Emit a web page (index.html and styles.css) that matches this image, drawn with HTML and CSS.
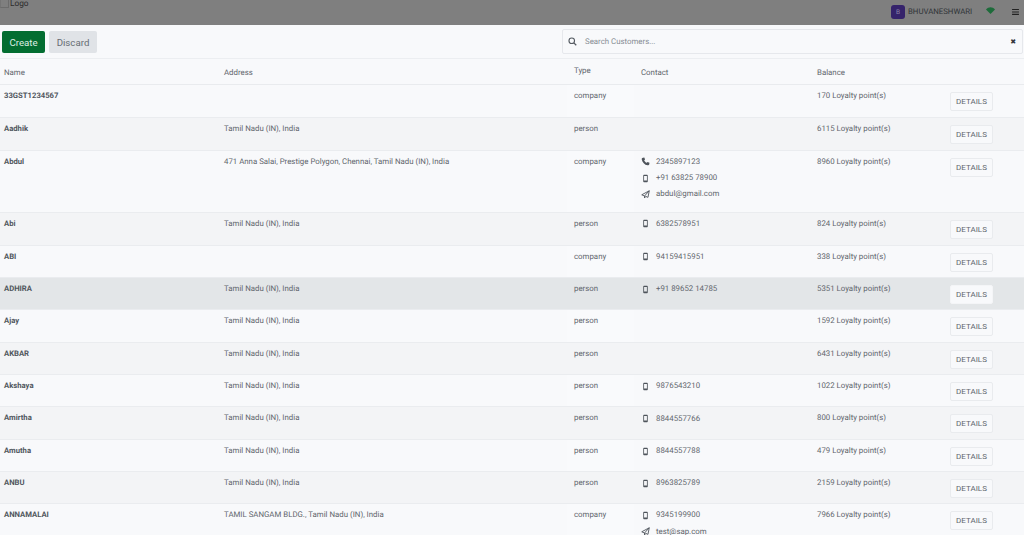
FILE: index.html
```html
<!DOCTYPE html>
<html lang="en">
<head>
<meta charset="utf-8">
<title>Customers</title>
<link rel="stylesheet" href="styles.css">
</head>
<body>
<svg class="defs" width="0" height="0" aria-hidden="true">
  <symbol id="i-phone" viewBox="0 0 12 12"><path d="M2.600 1 4.400.7 5.400 3.300 4.200 4.300C4.700 5.600 6.200 7.200 7.700 7.800L8.800 6.600 11.300 7.700 11 9.500C10.800 10.600 9.800 11.200 8.800 11 4.800 10.300 1.700 7.200 1 3.200.8 2.200 1.500 1.200 2.600 1Z" fill="currentColor"/></symbol>
  <symbol id="i-mobile" viewBox="0 0 12 12"><path d="M4 1h4a1 1 0 0 1 1 1v8a1 1 0 0 1-1 1H4a1 1 0 0 1-1-1V2a1 1 0 0 1 1-1Zm.1 1.600v6h3.800v-6H4.100Z" fill="currentColor" fill-rule="evenodd"/></symbol>
  <symbol id="i-send" viewBox="0 0 12 12"><path d="M11 1 9.300 9.800 6.300 8.500 4.700 10.700V8L1 6.400ZM4.700 8 11 1" fill="none" stroke="currentColor" stroke-width="1.200" stroke-linejoin="round"/></symbol>
</svg>

<header class="topbar">
  <div class="brand"><span class="broken-img"></span><span>Logo</span></div>
  <div class="user">
    <span class="avatar">B</span>
    <span class="username">BHUVANESHWARI</span>
    <svg class="wifi" viewBox="0 0 12 9" aria-hidden="true"><path d="M0 3C3.300-.6 8.700-.6 12 3L6 9Z" fill="currentColor"/></svg>
    <svg class="menu" viewBox="0 0 8 7" aria-hidden="true"><path d="M0 0h8v1.300H0zM0 2.800h8v1.300H0zM0 5.600h8v1.300H0z" fill="currentColor"/></svg>
  </div>
</header>

<section class="toolbar">
  <div class="actions">
    <button class="btn btn-create">Create</button>
    <button class="btn btn-discard">Discard</button>
  </div>
  <div class="search">
    <svg class="search-icon" viewBox="0 0 12 12" aria-hidden="true"><circle cx="5" cy="5" r="3.700" fill="none" stroke="currentColor" stroke-width="1.500"/><path d="M7.800 7.800 11 11" stroke="currentColor" stroke-width="1.700"/></svg>
    <span class="search-text">Search Customers...</span>
    <span class="search-clear">✖</span>
  </div>
</section>

<table class="customers">
  <colgroup>
    <col class="c-name"><col class="c-address"><col class="c-type"><col class="c-contact"><col class="c-balance"><col class="c-action">
  </colgroup>
  <thead>
    <tr><th>Name</th><th>Address</th><th class="th-type">Type</th><th>Contact</th><th>Balance</th><th></th></tr>
  </thead>
  <tbody>
    <tr class="h33"><td class="name">33GST1234567</td><td></td><td class="type">company</td><td></td><td>170 Loyalty point(s)</td><td><button class="details">DETAILS</button></td></tr>
    <tr class="h33"><td class="name">Aadhik</td><td>Tamil Nadu (IN), India</td><td class="type">person</td><td></td><td>6115 Loyalty point(s)</td><td><button class="details">DETAILS</button></td></tr>
    <tr class="h62"><td class="name">Abdul</td><td>471 Anna Salai, Prestige Polygon, Chennai, Tamil Nadu (IN), India</td><td class="type">company</td>
      <td><div class="contact"><svg><use href="#i-phone"/></svg>2345897123</div><div class="contact"><svg><use href="#i-mobile"/></svg>+91 63825 78900</div><div class="contact"><svg><use href="#i-send"/></svg>abdul@gmail.com</div></td>
      <td>8960 Loyalty point(s)</td><td><button class="details">DETAILS</button></td></tr>
    <tr class="h33"><td class="name">Abi</td><td>Tamil Nadu (IN), India</td><td class="type">person</td><td><div class="contact"><svg><use href="#i-mobile"/></svg>6382578951</div></td><td>824 Loyalty point(s)</td><td><button class="details">DETAILS</button></td></tr>
    <tr><td class="name">ABI</td><td></td><td class="type">company</td><td><div class="contact"><svg><use href="#i-mobile"/></svg>94159415951</div></td><td>338 Loyalty point(s)</td><td><button class="details">DETAILS</button></td></tr>
    <tr class="selected"><td class="name">ADHIRA</td><td>Tamil Nadu (IN), India</td><td class="type">person</td><td><div class="contact"><svg><use href="#i-mobile"/></svg>+91 89652 14785</div></td><td>5351 Loyalty point(s)</td><td><button class="details">DETAILS</button></td></tr>
    <tr><td class="name">Ajay</td><td>Tamil Nadu (IN), India</td><td class="type">person</td><td></td><td>1592 Loyalty point(s)</td><td><button class="details">DETAILS</button></td></tr>
    <tr><td class="name">AKBAR</td><td>Tamil Nadu (IN), India</td><td class="type">person</td><td></td><td>6431 Loyalty point(s)</td><td><button class="details">DETAILS</button></td></tr>
    <tr><td class="name">Akshaya</td><td>Tamil Nadu (IN), India</td><td class="type">person</td><td><div class="contact"><svg><use href="#i-mobile"/></svg>9876543210</div></td><td>1022 Loyalty point(s)</td><td><button class="details">DETAILS</button></td></tr>
    <tr><td class="name">Amirtha</td><td>Tamil Nadu (IN), India</td><td class="type">person</td><td><div class="contact"><svg><use href="#i-mobile"/></svg>8844557766</div></td><td>800 Loyalty point(s)</td><td><button class="details">DETAILS</button></td></tr>
    <tr><td class="name">Amutha</td><td>Tamil Nadu (IN), India</td><td class="type">person</td><td><div class="contact"><svg><use href="#i-mobile"/></svg>8844557788</div></td><td>479 Loyalty point(s)</td><td><button class="details">DETAILS</button></td></tr>
    <tr class="h32"><td class="name">ANBU</td><td>Tamil Nadu (IN), India</td><td class="type">person</td><td><div class="contact"><svg><use href="#i-mobile"/></svg>8963825789</div></td><td>2159 Loyalty point(s)</td><td><button class="details">DETAILS</button></td></tr>
    <tr><td class="name">ANNAMALAI</td><td>TAMIL SANGAM BLDG., Tamil Nadu (IN), India</td><td class="type">company</td><td><div class="contact"><svg><use href="#i-mobile"/></svg>9345199900</div><div class="contact"><svg><use href="#i-send"/></svg>test@sap.com</div></td><td>7966 Loyalty point(s)</td><td><button class="details">DETAILS</button></td></tr>
  </tbody>
</table>
</body>
</html>
```

FILE: styles.css
```css
* { box-sizing: border-box; }
html, body { height: 100%; }
body {
  margin: 0;
  height: 535px;
  overflow: hidden;
  background: #f8f9fb;
  color: #5f656c;
  font-family: Roboto, "Liberation Sans", sans-serif;
  font-size: 7.850px;
  text-rendering: geometricPrecision;
}
.defs { position: absolute; }

.topbar {
  height: 25px;
  background: #7f7f7f;
  display: flex;
  justify-content: space-between;
  color: #2c2c2c;
}
.brand { display: flex; align-items: flex-start; gap: 1px; line-height: 9px; font-size: 8.300px; }
.broken-img { width: 9px; height: 8px; border: 1px solid #6c6c6c; border-top: 0; border-left-color: #757575; }
.user { display: flex; align-items: center; height: 23px; padding-right: 5px; }
.avatar {
  width: 14px; height: 14px; border-radius: 3px;
  background: #35236b; color: #8d86a8;
  font-size: 6.500px; display: flex; align-items: center; justify-content: center;
}
.username { margin-left: 3px; font-size: 7.800px; color: #303438; width: 71px; }
.wifi { width: 9px; height: 7px; color: #1d6b3a; margin-left: 7px; margin-bottom: 2px; }
.menu { width: 7px; height: 6px; color: #222; margin-left: 17px; }

.toolbar {
  height: 34px;
  display: flex;
  justify-content: space-between;
  border-bottom: 1px solid #eceef1;
  padding: 4px 1px 0 2px;
}
.actions { display: flex; gap: 4px; padding-top: 2px; height: 24px; }
.btn {
  height: 22px; border: 0; border-radius: 2px;
  font-family: inherit; font-size: 9.700px; padding: 0;
}
.btn-create { width: 43px; background: #036d31; color: #dfeee5; }
.btn-discard { width: 48px; background: #e0e3e7; color: #666c73; }
.search {
  width: 461px; height: 25px;
  background: #f8f9fb;
  border: 1px solid #e6e8ec; border-radius: 2px;
  display: flex; align-items: center;
  padding: 0 6px 0 5px;
}
.search-icon { width: 9px; height: 9px; color: #555b62; }
.search-text { margin-left: 8px; color: #868c93; flex: 1; }
.search-clear { color: #33373c; font-size: 7px; }

.customers {
  width: 1024px;
  table-layout: fixed;
  border-collapse: collapse;
}
.c-name { width: 220px; }
.c-address { width: 347px; }
.c-type { width: 67px; }
.c-contact { width: 179px; }
.c-balance { width: 133px; }
.c-action { width: 78px; }

th {
  height: 25px;
  padding: 5px 4px 0;
  text-align: left;
  font-weight: 400;
  vertical-align: top;
  line-height: 18px;
  border-bottom: 1px solid #e9ebee;
}
th:nth-child(3), th:nth-child(4) { padding-left: 7px; }
.th-type { padding-top: 3px; }
tbody tr { height: 32.400px; border-bottom: 1px solid #eaecef; }
tbody tr.h33 { height: 33px; }
tbody tr.h32 { height: 32px; }
tbody tr.h62 { height: 62px; }
tbody tr:nth-child(even) td { background: #f3f4f6; }
td {
  padding: 6px 4px 0;
  vertical-align: top;
  line-height: 10px;
}
td.name { font-weight: 700; color: #50565d; font-size: 7.700px; }
td.type, td.type + td { padding-left: 7px; }
td:last-child { padding: 7px 0 0 4px; }
tbody tr:nth-child(odd) td.type {
  position: relative;
  background: #f9fafc;
  box-shadow: 0 -7px 0 #f9fafc, 0 7px 0 #f9fafc;
}
tbody tr.selected td { background: #e3e6e8; }

.contact { display: flex; align-items: center; height: 16.400px; }
.contact:first-child { margin-top: -3px; }
.contact svg { width: 9px; height: 9px; margin-right: 6px; color: #4e545b; }
.details {
  width: 43px; height: 19px;
  background: #f8f9fb;
  border: 1px solid #e9ebee; border-radius: 2px;
  color: #62686f;
  font-family: inherit; font-size: 8px;
  padding: 0;
}
tbody tr.selected .details { background: #f8f9fb; border-color: #f4f5f7; }
```
